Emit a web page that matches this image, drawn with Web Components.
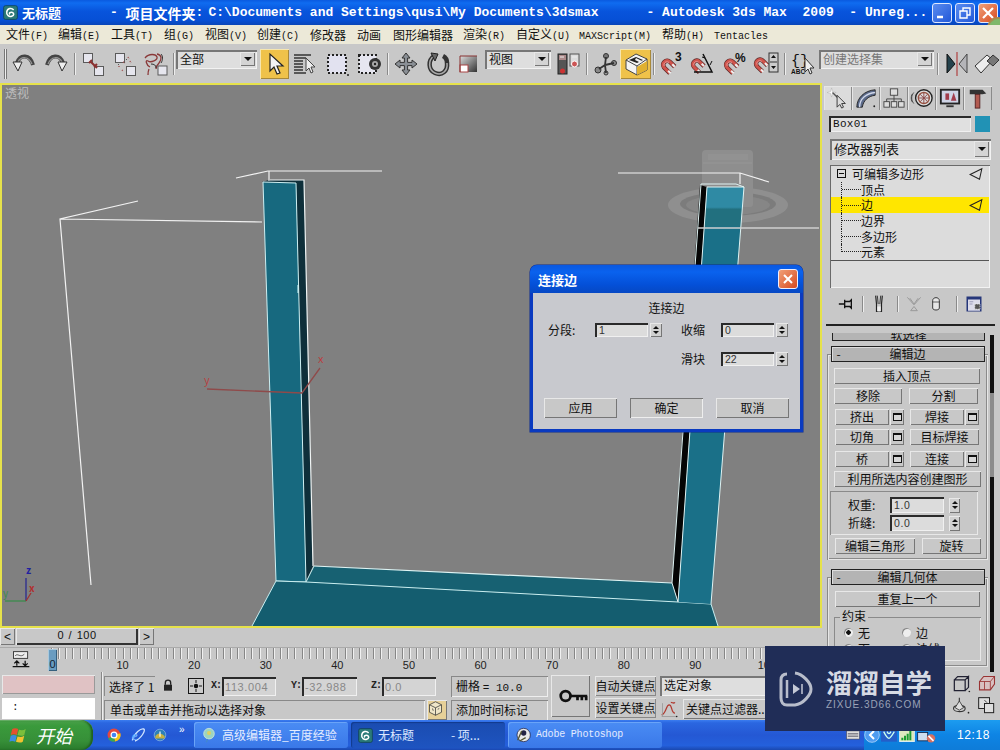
<!DOCTYPE html>
<html lang="zh">
<head>
<meta charset="utf-8">
<title>3ds Max</title>
<style>
html,body{margin:0;padding:0}
body{width:1000px;height:750px;overflow:hidden;position:relative;background:#c8c8c8;font:12px/1 "Noto Sans CJK SC","Liberation Sans",sans-serif;color:#111;display:flex;flex-direction:column}
.main{display:flex;height:589px}
.left{width:822px;display:flex;flex-direction:column}
</style>
</head>
<body>
<mx-titlebar></mx-titlebar>
<mx-menubar></mx-menubar>
<mx-toolbar></mx-toolbar>
<div class="main">
  <div class="left">
    <mx-viewport></mx-viewport>
    <mx-slider></mx-slider>
    <mx-track></mx-track>
  </div>
  <mx-panel></mx-panel>
</div>
<mx-status></mx-status>
<mx-taskbar></mx-taskbar>
<mx-dialog></mx-dialog>
<mx-watermark></mx-watermark>
<script>
const MONO='"Liberation Mono","Noto Sans CJK SC",monospace';
const RAISED='box-shadow:inset 1px 1px 0 #e8e8e8,inset -1px -1px 0 #767676;';
const SUNK='box-shadow:inset 2px 2px 0 #2a2a2a,inset -1px -1px 0 #f0f0f0;';
const sq=(x,y,s=9)=>`<rect x="${x}" y="${y}" width="${s}" height="${s}" fill="#e6e6ee" stroke="#5a5a5a"/>`;
const mag=`<path d="M12 21L5 14C1 9 8 3 12 7l6 6" fill="none" stroke="#5a2a2a" stroke-width="5.500"/><path d="M12 21L5 14C1 9 8 3 12 7l6 6" fill="none" stroke="#d0544c" stroke-width="3.800"/><path d="M5 12C4 8 8 6 11 8" fill="none" stroke="#eaa" stroke-width="1"/><path d="M10 18l3 3M15 10l3 3" stroke="#eee" stroke-width="2.600"/>`;
const magS=`<g transform="translate(0,4) scale(.82)">${mag}</g>`;
const ICONS={
undo:`<path d="M5 11C8 2 18 2 21 13" fill="none" stroke="#444" stroke-width="4"/><path d="M6 10C9 4 17 4 20 12" fill="none" stroke="#999" stroke-width="1.2"/><path d="M1 10h9l-4 9z" fill="#eee" stroke="#333"/>`,
redo:`<g transform="translate(24,0) scale(-1,1)"><path d="M5 11C8 2 18 2 21 13" fill="none" stroke="#444" stroke-width="4"/><path d="M6 10C9 4 17 4 20 12" fill="none" stroke="#999" stroke-width="1.2"/><path d="M1 10h9l-4 9z" fill="#eee" stroke="#333"/></g>`,
link:`${sq(2.5,1.5)}${sq(13.5,14.5)}<path d="M9 9l7 7M11 8l-3 3M16 12l-3 3" stroke="#8a3030" stroke-width="2" fill="none"/>`,
unlink:`${sq(2.5,1.5)}${sq(13.5,14.5)}<path d="M10 10l2 1M15 5l1 2M6 14v2M9 18l1 1M17 9l1 2" stroke="#a05050" stroke-width="1.4" stroke-dasharray="1 1"/><path d="M13 7l1 1M5 12l1 1" stroke="#555"/>`,
bind:`<path d="M1 6c4-5 11-4 12-1s-6 6-9 4-2 4 2 6M13 2c5 1 5 5 2 9M5 17c-1 2-1 4-1 6M15 11c-2 2-3 3-3 6" fill="none" stroke="#8a3838" stroke-width="1.3"/><path d="M17 2c2 2 2 6 0 9M7 12c3 0 5 1 5 4" fill="none" stroke="#333"/>${sq(14,14)}`,
arrow:`<path d="M7 2v17l4-4 3 7 3-1-3-7h6z" fill="#f4f4f4" stroke="#222" stroke-width="1.2"/>`,
byname:`<path d="M1 3h17M1 6h12M1 9h9M1 12h9M1 15h9M1 18h9M1 21h12" stroke="#333" stroke-width="1.6"/><path d="M13 6v13l3-3 2 5 2-1-2-5h4z" fill="#eee" stroke="#444"/>`,
rect:`<rect x="3" y="3" width="18" height="18" fill="#e2e2f0" stroke="#222" stroke-width="2" stroke-dasharray="2 2"/><circle cx="23" cy="23" r="1" fill="#222"/>`,
cross:`<rect x="1" y="3" width="17" height="18" fill="#e6e6f0" stroke="#222" stroke-width="2" stroke-dasharray="2 2"/><circle cx="17" cy="12" r="6" fill="#333"/><circle cx="17" cy="12" r="3" fill="#aaa"/><circle cx="17" cy="12" r="1.2" fill="#222"/>`,
move:`<path d="M12 1l4 5h-2.400v4.400h4.400V8l5 4-5 4v-2.400h-4.400V18H16l-4 5-4-5h2.400v-4.400H6V16l-5-4 5-4v2.400h4.400V6H8z" fill="#8a8f95" stroke="#333"/>`,
rotate:`<path d="M8 4C2 8 2 18 9 21s13-2 12-10c0-3-2-6-4-7" fill="none" stroke="#333" stroke-width="4.500"/><path d="M8 4C2 8 2 18 9 21s13-2 12-10" fill="none" stroke="#aaa" stroke-width="1.500"/><path d="M5 1l7 1-3 7z" fill="#666" stroke="#222"/>`,
scale:`<defs><linearGradient id="sc" x1="0" y1="0" x2="1" y2="1"><stop offset="0" stop-color="#ddd"/><stop offset="1" stop-color="#333"/></linearGradient></defs><rect x="3" y="4" width="17" height="16" fill="url(#sc)"/><rect x="3" y="13" width="8" height="7" fill="#fff" stroke="#a44"/><path d="M3 4h17M3 4v16" stroke="#833"/>`,
named:`<rect x="1" y="2" width="9" height="20" fill="#555" stroke="#222"/><rect x="2" y="3" width="7" height="5" fill="#a88"/><circle cx="5.500" cy="19" r="2.500" fill="#c33"/><rect x="13" y="2" width="9" height="12" fill="#ddd" stroke="#555"/><circle cx="17.500" cy="12" r="3" fill="#c55" stroke="#fff"/><path d="M3 5h4M15 5h5" stroke="#eee"/>`,
pivot:`<circle cx="5" cy="18" r="3" fill="#888" stroke="#333"/><circle cx="13" cy="4" r="2.500" fill="#777" stroke="#333"/><circle cx="21" cy="11" r="2.500" fill="#888" stroke="#333"/><circle cx="13" cy="21" r="2" fill="#999" stroke="#333"/><path d="M12 13L13 5M12 13L21 11M12 13L6 17M12 13L13 21" stroke="#333" stroke-width="1.800"/>`,
manip:`<path d="M2 8l10-6 11 5v11l-10 5-11-6z" fill="#f4f4f4" stroke="#444"/><path d="M2 8l11 6v9" fill="none" stroke="#444"/><path d="M23 7l-10 7" stroke="#444"/><path d="M5 8l7-3 7 3-6 3z" fill="#222"/><path d="M13 15l10-6v9l-10 5z" fill="#e0b030"/><path d="M12 6l6 3-1 2-6-3z" fill="#eee"/>`,
m3:`${magS}<text x="15" y="9" font-size="12" font-weight="700" font-family="Liberation Sans" fill="#111">3</text>`,
mang:`<g transform="translate(-1,4) scale(.78)">${mag}</g><path d="M12 2l9 18H3" fill="none" stroke="#111" stroke-width="1.500"/><path d="M11 5l3 1M19 13l2-4" stroke="#111"/>`,
mpct:`${magS}<text x="12" y="10" font-size="12" font-weight="700" font-family="Liberation Sans" fill="#111">%</text>`,
mspin:`<g transform="translate(-2,3) scale(.8)">${mag}</g><rect x="14" y="1" width="9" height="19" fill="#ccc" stroke="#333"/><path d="M16 6l2.500-3 2.500 3zM16 14l2.500 3 2.500-3z" fill="#111"/><path d="M15 10h7" stroke="#333"/>`,
abc:`<text x="0" y="13" font-size="15" font-family="Liberation Mono" fill="#111">{}</text><text x="0" y="22" font-size="6.500" font-weight="700" font-family="Liberation Sans" fill="#111">ABC</text><path d="M14 6v14l3-3 2 5 2-1-2-5h4z" fill="#eee" stroke="#333"/>`,
mirror:`<path d="M2 2v19l8-9z" fill="#24424c" stroke="#111"/><path d="M22 2v19l-8-9z" fill="#b4b4b8" stroke="#444"/><path d="M12 0v24" stroke="#b04040" stroke-width="1.200"/>`,
align:`<path d="M1 14L13 3l6 5L7 21z" fill="#eee" stroke="#333"/><path d="M13 9L19 3l6 5-6 6z" fill="#777" stroke="#333"/>`,
create:`<path d="M5 1l1 4 4 1-4 1-1 4-1-4-4-1 4-1z" fill="#fff" stroke="#aaa" stroke-width=".5"/><path d="M6 6l9 9" stroke="#555" stroke-width="1.500"/><path d="M11 9v13l3-3 2 4 2-1-2-4h4z" fill="#ddd" stroke="#333"/>`,
modify:`<path d="M2 22C2 12 10 4 22 3v6C14 10 9 15 8 22z" fill="#5b6a8a" stroke="#222"/><path d="M5 22C5 13 12 7 22 6" stroke="#cfd6e8" stroke-width="1.500" fill="none"/><circle cx="21" cy="21" r="1" fill="#222"/>`,
hier:`<rect x="8" y="2" width="8" height="7" fill="#ddd" stroke="#444"/><rect x="1" y="16" width="6" height="6" fill="#ddd" stroke="#444"/><rect x="9" y="16" width="6" height="6" fill="#ddd" stroke="#444"/><rect x="17" y="16" width="6" height="6" fill="#ddd" stroke="#444"/><path d="M12 9v7M4 16v-3h16v3" fill="none" stroke="#444"/>`,
motion:`<circle cx="14" cy="12" r="9" fill="#ddd" stroke="#222" stroke-width="1.500"/><circle cx="14" cy="12" r="6" fill="none" stroke="#954" stroke-width="1.500"/><path d="M14 6v12M8 12h12M10 8l8 8M18 8l-8 8" stroke="#844"/><path d="M3 6c-3 4-3 8 0 12M1 8c-1 3-1 5 0 8" stroke="#444" fill="none"/>`,
display:`<rect x="1" y="2" width="22" height="17" fill="#222"/><rect x="3" y="4" width="18" height="13" fill="#cfd4e6"/><path d="M7 7h4v7H7z" fill="#a23c4c"/><path d="M13 15l3-9 3 9z" fill="#a23c4c"/><path d="M8 21h8" stroke="#333" stroke-width="2"/>`,
util:`<path d="M3 3h14l4 4-4 1H3z" fill="#333"/><rect x="9" y="8" width="5" height="15" fill="#b25a50" stroke="#522"/>`,
pin:`<path d="M1 12h7M8 7v10M8 9h6l2-2v10l-2-2H8" fill="none" stroke="#111" stroke-width="1.600"/>`,
fork:`<path d="M8 2l1 10v9h6v-9l1-10" fill="none" stroke="#222" stroke-width="1.400"/><path d="M10 2l1 10M14 2l-1 10" stroke="#222"/><rect x="10" y="15" width="4" height="6" fill="#eee"/>`,
funnel:`<path d="M4 4l8 9 8-9M7 5l5 7M17 5l-5 7M8 20l4-5 4 5z" fill="none" stroke="#9a9a9a" stroke-width="1.200"/>`,
cup:`<path d="M7 7c0-6 10-6 10 0v11c0 4-10 4-10 0z" fill="#e6e6e6" stroke="#222" stroke-width="1.300"/><path d="M7 9h10" stroke="#222"/>`,
cfg:`<rect x="2" y="2" width="20" height="20" fill="#26377a"/><rect x="4" y="6" width="16" height="15" fill="#dcdcea"/><path d="M13 12h7v7h-7z" fill="#555" stroke="#eee" stroke-dasharray="2 1"/><path d="M6 9h5M6 12h4" stroke="#88a"/>`,
tkey:`<rect x="3" y="2" width="17" height="8" fill="#eee" stroke="#222"/><path d="M5 7c3-4 6 3 11-2" stroke="#444" fill="none"/><path d="M2 20h20M7 19v-6M4 16l3-3 3 3M17 13v6M14 16l3 3 3-3" fill="none" stroke="#111" stroke-width="1.500"/>`,
lock:`<path d="M5 10V7c0-5 8-5 8 0v3" fill="none" stroke="#222" stroke-width="2"/><rect x="3" y="10" width="12" height="9" fill="#222"/>`,
abs:`<rect x="2" y="2" width="20" height="20" fill="#ccc" stroke="#111" stroke-width="1.300"/><circle cx="12" cy="12" r="3" fill="#111"/><path d="M12 4v4M12 16v4M4 12h4M16 12h4" stroke="#111" stroke-width="1.300"/>`,
cube:`<path d="M10 1l8 4v10l-8 4-8-4V5z" fill="#efe6c8" stroke="#333"/><path d="M2 5l8 4 8-4M10 9v10" fill="none" stroke="#333"/><path d="M6 10l1 3M13 11l2-1" stroke="#333"/>`,
key:`<circle cx="7" cy="12" r="4.500" fill="none" stroke="#111" stroke-width="2.500"/><path d="M11 12h16M18 12v4M22 12v4M26 12v4" stroke="#111" stroke-width="2.500" fill="none"/>`,
fcurve:`<path d="M2 19c6-2 5-12 9-12s2 10 7 10M13 4c2 0 3 2 5 0" fill="none" stroke="#b03a30" stroke-width="1.500"/><path d="M2 21h17M3 5v16" stroke="#999"/><circle cx="20" cy="21" r="1" fill="#222"/>`,
nav1:`<path d="M4 7h13v13H4zM4 7l4-4h13M17 7l4-4v13l-4 4" fill="none" stroke="#223" stroke-width="1.500"/><circle cx="22" cy="21" r="1" fill="#222"/>`,
nav2:`<path d="M3 9l5-6h13v9l-5 7H3z" fill="#d8c0c0" stroke="#933" stroke-width="1.300"/><path d="M3 9h13v10M16 9l5-6M9 9v10" fill="none" stroke="#933"/>`,
nav3:`<path d="M10 2v5M3 15c0-5 14-5 14 0s-14 5-14 0z" fill="none" stroke="#333" stroke-width="1.300"/><path d="M10 6l5 8-5 3-5-3z" fill="#ddd" stroke="#333"/><circle cx="21" cy="20" r="1" fill="#222"/>`,
nav4:`<rect x="2" y="2" width="13" height="13" fill="#ddd" stroke="#222" stroke-width="1.200"/><rect x="9" y="9" width="11" height="11" fill="#ddd" stroke="#222" stroke-width="1.200"/><path d="M9 5l3 3" stroke="#222"/>`,
maxlogo:`<rect x="1" y="1" width="22" height="22" rx="3" fill="#2b7a78" stroke="#0c3a44"/><path d="M17 8C14 4 7 5 6 11s4 8 8 7 4-5 1-6-6 1-4 3" fill="none" stroke="#fff" stroke-width="2.400"/>`,
flag:`<path d="M3 4c3-2 6-1 8 0l-2 8c-2-1-5-2-8 0z" fill="#e5502e"/><path d="M12 5c3 1 6 1 9-1l-2 8c-3 2-6 1-9 0z" fill="#7bbf3c"/><path d="M1 13c3-2 6-1 8 0l-2 8c-2-1-5-2-8 0z" fill="#3c8ce0"/><path d="M10 14c3 1 6 1 9-1l-2 8c-3 2-6 1-9 0z" fill="#f2c230"/>`,
chrome:`<circle cx="12" cy="12" r="11" fill="#e5483c"/><path d="M12 12L2 18A11 11 0 0 0 14 23z" fill="#3aa757"/><path d="M12 12l11-3A11 11 0 0 1 14 23z" fill="#f5c518"/><circle cx="12" cy="12" r="5" fill="#4285f4" stroke="#fff" stroke-width="2"/>`,
ie:`<path d="M5 20C8 8 18 2 22 3S18 18 9 21" fill="none" stroke="#cfe4ff" stroke-width="2"/><text x="4" y="20" font-size="20" font-weight="700" font-style="italic" font-family="Liberation Serif" fill="#6ab0ff">e</text>`,
swirl:`<circle cx="12" cy="12" r="10" fill="#2c80b8" stroke="#a8c8e8"/><path d="M4 14c4-6 10-6 16 0v4H4z" fill="#c8b040"/><path d="M12 6v9" stroke="#fff" stroke-width="2"/>`,
bulb:`<circle cx="12" cy="10" r="8" fill="#9cd4c0" stroke="#e0f0e0"/><circle cx="12" cy="9" r="3" fill="#e0d060"/><path d="M10 18l-2 5" stroke="#48c" stroke-width="2"/>`,
ps:`<circle cx="13" cy="12" r="10" fill="#e8e8e8" stroke="#113"/><circle cx="13" cy="9" r="4" fill="#224"/><path d="M4 20L10 6M7 21L16 16" stroke="#553" stroke-width="2"/>`,
drive:`<rect x="1" y="5" width="22" height="14" fill="#ddd" stroke="#445"/><path d="M3 10h18M3 14h18" stroke="#445" stroke-width="1.500"/>`,
round:`<circle cx="12" cy="12" r="11" fill="#4f9cf0" stroke="#cfe4ff"/><path d="M15 6l-6 6 6 6" fill="none" stroke="#fff" stroke-width="3"/>`,
shield:`<rect x="0" y="2" width="24" height="20" fill="#245ec8"/><path d="M4 7c4 8 6 10 8 10s5-5 8-10" fill="none" stroke="#cfe" stroke-width="2"/><path d="M9 7c2 4 4 4 6 0" fill="none" stroke="#cfe" stroke-width="2"/>`,
signal:`<rect x="1" y="2" width="22" height="20" fill="#dce8c0" stroke="#fff"/><path d="M5 20v-4M9 20v-7M13 20v-10M17 20V5" stroke="#1a9c30" stroke-width="3"/>`,
net:`<rect x="2" y="9" width="12" height="10" fill="#cde" stroke="#124"/><path d="M14 6l1 1M17 3l1 2M21 2l1 3" stroke="#fff" stroke-width="1.500"/><circle cx="18" cy="16" r="5" fill="#d87060"/><path d="M15 13l6 6" stroke="#fff" stroke-width="2"/>`,
tri:`<path d="M2 13L22 3L18 21z" fill="none" stroke="#222" stroke-width="1.800"/>`
};
function def(name,css,html){
  customElements.define(name,class extends HTMLElement{
    connectedCallback(){
      if(this.shadowRoot)return;
      this.attachShadow({mode:'open'}).innerHTML=`<style>${css}</style>`+(typeof html==='function'?html(this):html);
    }
  });
}
def('mx-icon',`:host{display:inline-flex;flex:none;align-items:center;justify-content:center}svg{display:block;overflow:visible}`,
  el=>{const s=el.getAttribute('s')||24;return `<svg width="${s}" height="${s}" viewBox="0 0 24 24">${ICONS[el.getAttribute('n')]||''}</svg>`});
def('mx-btn',`:host{display:flex;align-items:center;justify-content:center;box-sizing:border-box;height:16px;background:#c8c8c8;${RAISED}font-size:12px;line-height:1;white-space:nowrap;flex:none}`,`<slot></slot>`);
def('mx-tick',`:host{display:flex;box-sizing:border-box;width:14px;height:16px;margin-left:1px;background:#c8c8c8;${RAISED}align-items:center;justify-content:center;flex:none}i{display:block;width:9px;height:8px;box-sizing:border-box;border:1px solid #111;border-top-width:2px;background:#d8d8d8}`,`<i></i>`);
def('mx-field',`:host{display:block;box-sizing:border-box;height:16px;background:#dcdcdc;${SUNK}padding:3px 0 0 4px;font:10.500px/1 "Liberation Sans",sans-serif;letter-spacing:.6px;color:#444;overflow:hidden;white-space:nowrap;flex:none}`,`<slot></slot>`);
def('mx-spin',`:host{display:flex;flex-direction:column;justify-content:center;gap:2px;align-items:center;box-sizing:border-box;width:11px;height:15px;background:#d0d0d0;${RAISED}flex:none}i{display:block;width:0;height:0;border:3px solid transparent}.u{border-bottom-color:#111;border-top-width:0}.d{border-top-color:#111;border-bottom-width:0}`,`<i class="u"></i><i class="d"></i>`);
def('mx-combo',`:host{display:flex;box-sizing:border-box;height:18px;background:#dedede;box-shadow:inset 2px 2px 0 #777,inset -1px -1px 0 #f2f2f2;flex:none;align-items:stretch}
 .t{flex:1;padding:3px 0 0 4px;font-size:inherit;line-height:1;white-space:nowrap;overflow:hidden}
 .b{width:15px;margin:2px 2px 3px 0;background:#d4d4d4;${RAISED}display:flex;align-items:center;justify-content:center}
 .b i{display:block;width:0;height:0;border:4px solid transparent;border-top:4px solid #111;border-bottom-width:0}`,
 `<div class="t"><slot></slot></div><div class="b"><i></i></div>`);

def('mx-titlebar',`:host{display:flex;flex:none;height:25px;align-items:center;background:linear-gradient(#0a5ae0 0,#0f6cf0 12%,#0854dc 45%,#0650d6 80%,#0a46b8 100%);color:#fff;font-weight:700;font-size:13px;white-space:nowrap;position:relative;overflow:hidden}
 .m{font-family:${MONO};white-space:pre;font-size:13px}
 .c{font-size:14px}
 .w{display:block;box-sizing:border-box;width:20px;height:20px;border:1px solid #dfe8ff;border-radius:3px;background:linear-gradient(135deg,#5a8cf0,#2258d8);margin-left:3px;position:relative;flex:none}
 .x{background:linear-gradient(135deg,#f0a078,#d84a20)}
 .bars{margin-left:auto;display:flex;margin-right:2px}
 svg{display:block}
 .blob{position:absolute;right:-9px;top:17px;width:18px;height:18px;border-radius:50%;background:#7fb86a;border:2px solid #a88b50}`,
 `<mx-icon n="maxlogo" s="15" style="margin:0 4px 0 3px"></mx-icon><span style="width:88px">无标题</span><span class="m">- </span><span class="c">项目文件夹</span><span class="m" style="margin-right:5px">:</span><span class="m">C:\\Documents and Settings\\qusi\\My Documents\\3dsmax</span><span class="m" style="margin-left:48px">- Autodesk 3ds Max  2009  - Unreg...</span>
 <div class="bars"><span class="w"><svg width="18" height="18"><path d="M4 13h6" stroke="#fff" stroke-width="2.500"/></svg></span><span class="w"><svg width="18" height="18"><path d="M4 7h7v7H4zM7 7V4h7v7h-3" fill="none" stroke="#fff" stroke-width="1.400"/></svg></span><span class="w x"><svg width="18" height="18"><path d="M4 4l10 10M14 4L4 14" stroke="#fff" stroke-width="2.200"/></svg></span></div><div class="blob"></div>`);

def('mx-menubar',`:host{display:flex;flex:none;height:20px;background:#ece9d8;align-items:center;padding-left:6px;font-size:12px;white-space:nowrap;box-shadow:inset 0 -1px 0 #c8c8c8}
 span{display:block;flex:none}small{font:10px ${MONO};}`,
 [['文件<small>(F)</small>',52],['编辑<small>(E)</small>',53],['工具<small>(T)</small>',53],['组<small>(G)</small>',41],['视图<small>(V)</small>',52],['创建<small>(C)</small>',53],['修改器',47],['动画',36],['图形编辑器',70],['渲染<small>(R)</small>',53],['自定义<small>(U)</small>',63],['<small>MAXScript(M)</small>',83],['帮助<small>(H)</small>',52],['<small>Tentacles</small>',60]].map(([t,w])=>`<span style="width:${w}px">${t}</span>`).join(''));

def('mx-tool',`:host{display:flex;flex:none;align-items:center;justify-content:center;height:38px}:host([on]){background:#efc24a;box-shadow:inset 1px 1px 0 #f6e6b0,inset -1px -1px 0 #a8893a;height:30px;margin-top:-1px}`,
 el=>`<mx-icon n="${el.getAttribute('n')}" s="${el.getAttribute('s')||24}"></mx-icon>`);
def('mx-toolbar',`:host{display:flex;flex:none;height:38px;background:#c8c8c8;align-items:center;overflow:hidden}
 .sep{flex:none;width:1px;height:22px;background:#8a8a8a;box-shadow:1px 0 0 #eee}
 .grip{flex:none;width:1px;height:30px;margin:0 0 0 4px;border-left:1px solid #777;border-right:1px solid #777;background:#eee}
 mx-combo{height:19px;margin-top:-9px}`,
 (()=>{const t=(n,w,x='')=>`<mx-tool n="${n}" style="width:${w}px" ${x}></mx-tool>`,s=(l,r)=>`<div class="sep" style="margin:0 ${r}px 0 ${l}px"></div>`;
 return `<div class="grip"></div>`+`<div style="width:1px;flex:none"></div>`+t('undo',32)+t('redo',32)+s(2,2)+t('link',32)+t('unlink',31)+t('bind',32)+s(1,1)+
 `<mx-combo style="width:81px;margin-left:1px;margin-right:3px">全部</mx-combo>`+t('arrow',29,'on')+t('byname',32)+t('rect',32)+t('cross',33)+s(1,2)+t('move',32)+t('rotate',32)+t('scale',29)+
 `<mx-combo style="width:66px;margin-left:2px;margin-right:2px">视图</mx-combo>`+t('named',31)+s(2,3)+t('pivot',30)+t('manip',31,'on')+s(2,2)+t('m3',31)+t('mang',32)+t('mpct',32)+t('mspin',32)+s(1,2)+t('abc',32)+
 `<mx-combo style="width:115px;color:#777">创建选择集</mx-combo>`+s(3,3)+t('mirror',32)+t('align',26)})());

def('mx-viewport',`:host{display:block;box-sizing:border-box;height:545px;border:2px solid #e6e24a;background:#808080;overflow:hidden;flex:none}svg{display:block}text{font-family:"Noto Sans CJK SC","Liberation Sans",sans-serif}`,
`<svg width="818" height="541" viewBox="2 85 818 541">
<defs><linearGradient id="rc" x1="0" y1="187" x2="0" y2="240" gradientUnits="userSpaceOnUse"><stop offset="0" stop-color="#2f8aa4"/><stop offset=".38" stop-color="#2f8aa4"/><stop offset=".42" stop-color="#22707f"/><stop offset=".72" stop-color="#22707f"/><stop offset=".78" stop-color="#1a7088"/></linearGradient></defs>
<text x="5" y="98" font-size="12" fill="#bcbcbc">透视</text>
<ellipse cx="728" cy="205" rx="60" ry="18" fill="#8f8f8f"/><ellipse cx="728" cy="204" rx="48" ry="12" fill="#7c7c7c"/><ellipse cx="728" cy="205" rx="42" ry="10" fill="#868686"/>
<path d="M706 150h43q4 0 4 4v50q0 3-3 3h-45q-3 0-3-3v-50q0-4 4-4z" fill="#8e8e8e"/><path d="M703 163h49" stroke="#969696" fill="none" stroke-width="1"/><path d="M708 154h40v6h-40z" fill="#929292"/>
<path d="M269 180L304 180L313 566L306 582L296 183L262 182z" fill="#0e2f3a"/>
<path d="M263 182L296 183L306 582L276 581z" fill="#17697f"/>
<path d="M263 182L276 581L306 582L296 183L263 182" fill="none" stroke="#cdeff2" stroke-width="1"/>
<path d="M270 180L304 180L313 566" fill="none" stroke="#f0f4f4" stroke-width="1.200"/>
<path d="M306 582L314 566L672 583L678 602z" fill="#176172"/>
<path d="M276 581L306 582L678 602L711 604L718 626L252 626z" fill="#145d6f"/>
<path d="M314 566L672 583" stroke="#dff4f4" stroke-width="1.200" fill="none"/>
<path d="M252 626L276 581L306 582L678 602L711 604L718 626M306 582L314 566" stroke="#c8eef0" stroke-width="1" fill="none"/>
<path d="M700 185L707 187L678 602L672 583z" fill="#050505"/>
<path d="M707 187L744 187L711 604L678 602z" fill="url(#rc)"/>
<path d="M701 184L736 184L744 187L711 604M707 187L744 187M707 187L678 602M701 184L672 583L678 602" fill="none" stroke="#dff3f3" stroke-width="1"/>
<g stroke="#f2f2f2" stroke-width="1.200" fill="none">
<path d="M236 178L268 171L382 171M269 171V181"/>
<path d="M138 201L60 219L91 585M60 219L262 222"/>
<path d="M618 173H740L769 182M740 173V184"/>
</g>
<path d="M698 228H819" stroke="#cfcfcf" stroke-width="1.400"/>
<path d="M298 285v8" stroke="#dff" stroke-width="1"/>
<path d="M207 389L302 393L320 368" stroke="#8f4a4a" stroke-width="1.300" fill="none"/>
<text x="204" y="384" font-size="11" fill="#b84040">y</text><text x="318" y="363" font-size="11" fill="#b84040">x</text>
<path d="M26 578V601" stroke="#2a2a90" stroke-width="1.300"/><path d="M5 601H26" stroke="#3c8c4c" stroke-width="1.300"/><path d="M26 601L31 593" stroke="#a03030" stroke-width="1.300"/>
<text x="26" y="574" font-size="10" font-weight="700" fill="#2020a0">z</text><text x="29" y="592" font-size="10" font-weight="700" fill="#b03030">x</text><text x="3" y="597" font-size="10" fill="#3c8c4c">y</text>
</svg>`);

def('mx-slider',`:host{display:flex;flex:none;height:20px;background:#c8c8c8;align-items:flex-start;font:11px/1 "Liberation Sans",sans-serif;box-shadow:inset 0 -1px 0 #aaa}
 .a{width:15px;height:17px;${RAISED}display:flex;align-items:center;justify-content:center;font-size:12px;flex:none}
 .s{width:122px;height:17px;margin:0 1px;box-shadow:inset 1px 1px 0 #e8e8e8,inset -2px -2px 0 #333;display:flex;align-items:center;justify-content:center;letter-spacing:.5px;word-spacing:1px;flex:none;padding-bottom:3px;box-sizing:border-box}`,
 `<div class="a">&lt;</div><div class="s">0 / 100</div><div class="a">&gt;</div>`);

def('mx-track',`:host{display:flex;flex:none;height:24px;background:#c8c8c8;position:relative;overflow:hidden}
 .i{width:48px;flex:none;display:flex;justify-content:center;padding:0 6px 0 0;box-sizing:border-box;align-items:center}
 .r{flex:1;min-width:0;display:flex;flex-direction:column}
 .t{height:11px;background:repeating-linear-gradient(90deg,transparent 0 3px,#868686 3px 4px,#f0f0f0 4px 5px,transparent 5px 7.160px);flex:none}
 .l{display:flex;padding-left:38.800px;font:11px/13px "Liberation Sans",sans-serif;color:#222;flex:none}
 .l span{width:71.600px;text-align:center;flex:none}
 .th{position:absolute;left:48px;top:1px;width:9px;height:22px;background:#6a9cc0;box-shadow:inset 1px 1px 0 #a8c8dc,inset -1px -1px 0 #36607e;font:11px/1 "Liberation Sans",sans-serif;display:flex;align-items:flex-end;justify-content:center;padding-bottom:1px;box-sizing:border-box;color:#123}`,
 `<div class="i"><mx-icon n="tkey" s="20"></mx-icon></div><div class="r"><div class="t"></div><div class="l">${[10,20,30,40,50,60,70,80,90,100].map(n=>`<span>${n}</span>`).join('')}</div></div><div class="th">0</div>`);

def('mx-rollout',`:host{display:block;width:161px;margin-left:5px}
 .h{box-sizing:border-box;height:16px;margin:0 3px 0 4px;background:#b4b4b4;border:1px solid #222;box-shadow:inset 1px 1px 0 #ddd;display:flex;align-items:center;position:relative;z-index:1;font-size:12px}
 .h b{font-weight:400;width:13px;text-align:center;flex:none}.h span{flex:1;text-align:center;padding-right:14px}
 .f{box-sizing:border-box;margin-top:-8px;padding:14px 7px 6px 7px;box-shadow:inset 1px 1px 0 #8a8a8a,inset 2px 2px 0 #e6e6e6,inset -1px -1px 0 #e6e6e6,inset -2px -2px 0 #8a8a8a}`,
 el=>`<div class="h"><b>-</b><span>${el.getAttribute('t')}</span></div><div class="f"><slot></slot></div>`);

def('mx-stack',`:host{display:block;box-sizing:border-box;width:160px;height:123px;margin-left:8px;background:#dcdcdc;box-shadow:inset 1px 1px 0 #6a6a6a,inset -1px -1px 0 #f2f2f2;padding:1px 1px 0;font-size:12px}
 .list{height:94px;border-bottom:1px solid #555;display:grid;grid-auto-rows:15.700px}
 .r{display:flex;align-items:center;white-space:nowrap;position:relative}
 .box{width:9px;height:9px;box-sizing:border-box;border:1px solid #111;margin:0 6px 0 6px;flex:none;background:linear-gradient(#111,#111) center/5px 1px no-repeat}
 .c{flex:none;width:20px;height:100%;margin-left:10px;box-sizing:border-box;border-left:1px dotted #222;margin-right:0;background:repeating-linear-gradient(90deg,#222 0 1px,transparent 1px 2px) 0 50%/100% 1px no-repeat}
 .c.e{height:50%;align-self:flex-start;background-position:0 100%}
 .on{background:#ffe600}
 mx-icon{margin-left:auto;margin-right:6px}`,
 `<div class="list">
 <div class="r"><span class="box"></span>可编辑多边形<mx-icon n="tri" s="14"></mx-icon></div>
 <div class="r"><span class="c"></span>顶点</div>
 <div class="r on"><span class="c"></span>边<mx-icon n="tri" s="14"></mx-icon></div>
 <div class="r"><span class="c"></span>边界</div>
 <div class="r"><span class="c"></span>多边形</div>
 <div class="r"><span class="c e"></span>元素</div></div>`);

def('mx-panel',`:host{display:flex;flex-direction:column;width:178px;height:589px;background:#c8c8c8;overflow:hidden;flex:none;padding-top:3px;box-sizing:border-box}
 .tabs{display:flex;height:24px;margin-left:2px;flex:none}
 .tab{width:28px;display:flex;align-items:center;justify-content:center;box-shadow:inset 1px 1px 0 #e6e6e6,inset -1px 0 0 #8a8a8a;flex:none}
 .tab.on{background:#dcdcdc}
 .name{display:flex;margin:6px 0 0 7px;flex:none}
 .name mx-field{width:142px;font:11px/1 ${MONO};color:#111;letter-spacing:.3px;background:#e0e0e0}
 .sw{width:15px;height:16px;background:#2192b5;margin-left:4px;flex:none}
 .mc{width:161px;height:21px;margin:7px 0 5px 8px;font-size:13px}
 .ic{display:flex;height:24px;margin:4px 0 8px;align-items:center;flex:none}
 .ic i{display:block;width:1px;height:16px;background:#8a8a8a;box-shadow:1px 0 0 #eee;flex:none}
 .line{height:2px;background:#222;margin:0 5px 0 4px;flex:none}
 .roll{display:flex;flex:1;min-height:0}
 .col{width:168px;flex:none}
 .sb{width:4px;margin-left:0;background:#111;margin-top:9px;flex:none;display:flex;flex-direction:column}
 .sb div{height:84px;margin-top:58px;background:#8c8c8c}
 .part{height:8px;margin:7px 0 5px 10px;width:153px;overflow:hidden;box-sizing:border-box;background:#b4b4b4;border:1px solid #222;border-top:0;font-size:12px;line-height:4px;text-align:center;flex:none}
 .row{display:flex;margin-top:4px}
 .gr{margin:4px 0 0 -4px;width:148px;height:44px;box-sizing:border-box;box-shadow:inset 1px 1px 0 #8a8a8a,inset -1px -1px 0 #e8e8e8;padding:6px 0 0 18px;display:flex;flex-direction:column;gap:2px}
 .gr div{display:flex;align-items:center;height:16px}.gr label{width:42px;flex:none}.gr mx-field{width:54px;color:#333}.gr mx-spin{margin-left:5px}
 .cs{position:relative;margin-top:10px;height:44px;box-shadow:inset 1px 1px 0 #8a8a8a,inset -1px -1px 0 #e8e8e8;padding:9px 0 0 10px;box-sizing:border-box;width:147px}
 .cs em{position:absolute;left:6px;top:-7px;background:#c8c8c8;font-style:normal;padding:0 2px}
 .rr{display:grid;grid-template-columns:58px 60px;row-gap:3px}
 .rr span{display:flex;align-items:center;gap:5px;height:13px;white-space:nowrap}
 .rr u{display:block;width:9px;height:9px;border-radius:50%;background:#eee;box-shadow:inset 1px 1px 0 #888;flex:none}
 .rr u.on{background:radial-gradient(#111 0 2px,#eee 2.500px)}`,
 `<div class="tabs"><div class="tab on"><mx-icon n="create" s="22"></mx-icon></div><div class="tab"><mx-icon n="modify" s="22"></mx-icon></div><div class="tab"><mx-icon n="hier" s="22"></mx-icon></div><div class="tab"><mx-icon n="motion" s="22"></mx-icon></div><div class="tab"><mx-icon n="display" s="22"></mx-icon></div><div class="tab"><mx-icon n="util" s="22"></mx-icon></div></div>
 <div class="name"><mx-field>Box01</mx-field><div class="sw"></div></div>
 <mx-combo class="mc">修改器列表</mx-combo>
 <mx-stack></mx-stack>
 <div class="ic"><mx-icon n="pin" s="20" style="margin-left:16px"></mx-icon><i style="margin-left:4px"></i><mx-icon n="fork" s="20" style="margin-left:6px"></mx-icon><i style="margin-left:8px"></i><mx-icon n="funnel" s="20" style="margin-left:6px"></mx-icon><mx-icon n="cup" s="16" style="margin-left:4px"></mx-icon><i style="margin-left:12px"></i><mx-icon n="cfg" s="18" style="margin-left:8px"></mx-icon></div>
 <div class="line"></div>
 <div class="roll"><div class="col">
  <div class="part">软选择</div>
  <mx-rollout t="编辑边">
   <mx-btn style="width:146px">插入顶点</mx-btn>
   <div class="row"><mx-btn style="width:68px">移除</mx-btn><mx-btn style="width:69px;margin-left:7px">分割</mx-btn></div>
   <div class="row" style="margin-top:5px"><mx-btn style="width:54px;margin-left:1px">挤出</mx-btn><mx-tick></mx-tick><mx-btn style="width:54px;margin-left:6px">焊接</mx-btn><mx-tick></mx-tick></div>
   <div class="row"><mx-btn style="width:54px;margin-left:1px">切角</mx-btn><mx-tick></mx-tick><mx-btn style="width:69px;margin-left:6px">目标焊接</mx-btn></div>
   <div class="row" style="margin-top:6px"><mx-btn style="width:54px;margin-left:1px">桥</mx-btn><mx-tick></mx-tick><mx-btn style="width:54px;margin-left:6px">连接</mx-btn><mx-tick></mx-tick></div>
   <div class="row"><mx-btn style="width:147px">利用所选内容创建图形</mx-btn></div>
   <div class="gr"><div><label>权重:</label><mx-field>1.0</mx-field><mx-spin></mx-spin></div><div><label>折缝:</label><mx-field>0.0</mx-field><mx-spin></mx-spin></div></div>
   <div class="row" style="margin-top:3px"><mx-btn style="width:80px;margin-left:1px">编辑三角形</mx-btn><mx-btn style="width:59px;margin-left:7px">旋转</mx-btn></div>
  </mx-rollout>
  <mx-rollout t="编辑几何体" style="margin-top:9px">
   <mx-btn style="width:145px;margin-left:1px">重复上一个</mx-btn>
   <div class="cs"><em>约束</em><div class="rr"><span><u class="on"></u>无</span><span><u></u>边</span><span><u></u>面</span><span><u></u>法线</span></div></div>
  </mx-rollout>
 </div><div class="sb"><div></div></div></div>`);

def('mx-status',`:host{display:flex;flex:none;height:48px;background:#c8c8c8;font-size:12px;white-space:nowrap;overflow:hidden}
 .lc{width:93px;margin:3px 0 0 2px;flex:none}
 .pink{height:19px;background:#e0c2c4;${RAISED.replace('#767676','#999')}}
 .white{height:21px;margin-top:4px;background:#fff;padding:4px 0 0 10px;box-sizing:border-box;font:11px/1 ${MONO}}
 .vs{width:1px;margin:0 3px 0 6px;background:#888;box-shadow:1px 0 0 #eee;flex:none}
 .c1{width:343px;flex:none;margin:3px 0 0 -1px}
 .r1{display:flex;height:22px;align-items:center}
 .sel{width:51px;height:20px;box-shadow:inset 1px 1px 0 #8a8a8a;padding:5px 0 0 5px;box-sizing:border-box;overflow:hidden;flex:none}
 .lab{font:700 10px/1 ${MONO};letter-spacing:-1px;width:11px;flex:none;color:#222}
 .f{width:55px;height:19px;padding:5px 0 0 3px;color:#888;font-size:11px;background:#d4d4d4}
 .r2{display:flex;height:20px;margin-top:3px}
 .pr{width:321px;height:20px;box-shadow:inset 1px 1px 0 #888,inset -1px -1px 0 #eee;padding:4px 0 0 6px;box-sizing:border-box;flex:none}
 .cb{width:20px;height:20px;margin-left:2px;background:#e6d098;${RAISED}display:flex;align-items:center;justify-content:center;flex:none}
 .c2{width:97px;margin:4px 0 0 4px;flex:none}
 .c2 div{height:21px;box-shadow:inset 1px 1px 0 #888,inset -1px -1px 0 #eee;padding:4px 0 0 5px;box-sizing:border-box;margin-bottom:3px}
 .mm{font:11px/1 ${MONO}}
 .key{width:39px;height:42px;margin:3px 0 0 3px;${RAISED}display:flex;align-items:center;justify-content:center;flex:none}
 .c3{width:61px;margin:4px 0 0 5px;flex:none}
 .c3 div{height:20px;box-shadow:inset 1px 1px 0 #e8e8e8,inset -1px -1px 0 #888;display:flex;align-items:center;justify-content:center;margin-bottom:2px}
 .c4{width:125px;margin:4px 0 0 4px;flex:none}
 .c4 mx-combo{width:125px;height:20px}
 .c4 .l{display:flex;margin-top:2px;align-items:center;height:22px}
 .c4 .k{margin-left:3px;width:95px;height:20px;${RAISED}display:flex;align-items:center;padding-left:3px;box-sizing:border-box}
 .nav{margin-left:auto;width:52px;display:grid;grid-template-columns:26px 26px;grid-auto-rows:22px;padding-top:1px;flex:none;justify-items:center;align-items:center}`,
 `<div class="lc"><div class="pink"></div><div class="white">:</div></div><div class="vs"></div>
 <div class="c1"><div class="r1"><div class="sel">选择了 1</div><mx-icon n="lock" s="16" style="margin-left:7px"></mx-icon><mx-icon n="abs" s="18" style="margin-left:9px"></mx-icon><span class="lab" style="margin-left:6px">X:</span><mx-field class="f" style="width:54px">113.004</mx-field><span class="lab" style="margin-left:15px">Y:</span><mx-field class="f">-32.988</mx-field><span class="lab" style="margin-left:14px">Z:</span><mx-field class="f" style="width:54px">0.0</mx-field></div>
 <div class="r2"><div class="pr">单击或单击并拖动以选择对象</div><div class="cb"><mx-icon n="cube" s="18"></mx-icon></div></div></div>
 <div class="c2"><div>栅格 <span class="mm">= 10.0</span></div><div>添加时间标记</div></div>
 <div class="key"><mx-icon n="key" s="26"></mx-icon></div>
 <div class="c3"><div>自动关键点</div><div>设置关键点</div></div>
 <div class="c4"><mx-combo>选定对象</mx-combo><div class="l"><mx-icon n="fcurve" s="20"></mx-icon><div class="k">关键点过滤器...</div></div></div>
 <div class="nav"><mx-icon n="nav1" s="20"></mx-icon><mx-icon n="nav2" s="20"></mx-icon><mx-icon n="nav3" s="20"></mx-icon><mx-icon n="nav4" s="20"></mx-icon></div>`);

def('mx-taskbar',`:host{display:flex;flex:none;height:30px;background:linear-gradient(#3a7cf0 0,#2a66e0 10%,#2458d4 50%,#2460dc 85%,#1a48b0 100%);color:#fff;font-size:12px;white-space:nowrap;align-items:stretch;overflow:hidden}
 .st{width:93px;flex:none;background:linear-gradient(#4aa04a,#3a9a3c 20%,#368f38 70%,#2a7a2c);border-radius:0 12px 12px 0;box-shadow:inset -2px 0 2px #1f5f20,inset 0 1px 0 #7cc87c;display:flex;align-items:center;padding-left:10px;box-sizing:border-box;font:italic 18px/1 "Noto Sans CJK SC",sans-serif;gap:8px}
 .q{display:flex;align-items:center;gap:8px;margin-left:14px;width:84px;flex:none;font:10px/1 "Liberation Sans",sans-serif}
 .q b{font-weight:400;margin:-10px 0 0 4px}
 .t{display:flex;align-items:center;margin:2px 0 2px 3px;width:154px;border-radius:3px;background:linear-gradient(#4a8cf4,#3a78e8);box-shadow:inset 1px 1px 0 #6aa4f8;padding-left:7px;box-sizing:border-box;gap:5px;flex:none;overflow:hidden;color:#e4ecff}
 .t.a{background:linear-gradient(#1a4cb0,#1e54c0);box-shadow:inset 1px 1px 1px #123a8c;color:#dce8ff}
 .mono{font:10px/1 ${MONO};letter-spacing:-.2px}
 .dr{margin-left:auto;margin-right:4px;align-self:center}
 .tr{width:136px;background:linear-gradient(#1c9cf0,#0e84e4 50%,#0e7cd8);display:flex;align-items:center;flex:none;box-sizing:border-box}
 .tr mx-icon{margin-right:1px}
 .clk{font:12px/1 "Liberation Sans",sans-serif;margin-left:20px;letter-spacing:.6px}`,
 `<div class="st"><mx-icon n="flag" s="18"></mx-icon><span>开始</span></div>
 <div class="q"><mx-icon n="chrome" s="14"></mx-icon><mx-icon n="ie" s="16"></mx-icon><mx-icon n="swirl" s="14"></mx-icon><b>»</b></div>
 <div class="t"><mx-icon n="bulb" s="16"></mx-icon>高级编辑器_百度经验</div>
 <div class="t a"><mx-icon n="maxlogo" s="15"></mx-icon>无标题<span style="margin-left:32px">- 项...</span></div>
 <div class="t"><mx-icon n="ps" s="16"></mx-icon><span class="mono">Adobe Photoshop</span></div>
 <mx-icon class="dr" n="drive" s="14"></mx-icon>
 <div class="tr"><mx-icon n="round" s="16"></mx-icon><mx-icon n="shield" s="16"></mx-icon><mx-icon n="signal" s="16" style="margin-left:1px"></mx-icon><mx-icon n="net" s="20"></mx-icon><span class="clk">12:18</span></div>`);

def('mx-dialog',`:host{position:absolute;left:530px;top:265px;width:273px;height:167px;box-sizing:border-box;display:flex;flex-direction:column;background:#0a3ac0;border-radius:7px 7px 0 0;padding:0 3px 3px;box-shadow:0 0 0 .5px #0a2a90;font-size:12px}
 .tb{height:28px;flex:none;margin:0 -3px;background:linear-gradient(#0a58e0,#0a62ee 25%,#0450d8 70%,#0648c4);border-radius:7px 7px 0 0;color:#fff;font-weight:700;font-size:13px;display:flex;align-items:center;padding-left:8px}
 .x{margin-left:auto;margin-right:5px;width:20px;height:20px;box-sizing:border-box;border:1px solid #eef;border-radius:3px;background:linear-gradient(135deg,#f0a078,#d84a20);display:flex;align-items:center;justify-content:center}
 .b{flex:1;background:#c8c9ce;padding:9px 0 0 15px}
 .cap{height:14px;text-align:center;margin-left:-15px}
 .g{display:grid;grid-template-columns:47px 67px 19px 40px 67px;grid-auto-rows:14px;row-gap:15px;margin-top:7px;align-items:center}
 .g div{display:flex;align-items:center;justify-content:space-between}
 mx-field{width:53px;height:14px;padding-top:2px;font-size:10.500px;color:#333;letter-spacing:0;background:#dcdcdc}
 mx-spin{height:14px;width:12px}
 .bs{display:flex;gap:13px;margin:32px 0 0 -4px}
 mx-btn{width:73px;height:20px}
 mx-btn.o{box-shadow:inset 1px 1px 0 #777,inset -1px -1px 0 #eee}`,
 `<div class="tb">连接边<div class="x"><svg width="12" height="12"><path d="M2 2l8 8M10 2l-8 8" stroke="#fff" stroke-width="2"/></svg></div></div>
 <div class="b"><div class="cap">连接边</div>
 <div class="g"><span>分段:</span><div><mx-field>1</mx-field><mx-spin></mx-spin></div><span></span><span>收缩</span><div><mx-field>0</mx-field><mx-spin></mx-spin></div>
 <span></span><span></span><span></span><span>滑块</span><div><mx-field>22</mx-field><mx-spin></mx-spin></div></div>
 <div class="bs"><mx-btn>应用</mx-btn><mx-btn class="o">确定</mx-btn><mx-btn>取消</mx-btn></div></div>`);

def('mx-watermark',`:host{position:absolute;left:765px;top:646px;width:180px;height:85px;background:#202d57;box-sizing:border-box;padding:25px 0 0 14px;display:flex;gap:13px;color:#c4c9d6}
 .c{display:flex;flex-direction:column}
 .t{font:700 26.500px/28px "Noto Sans CJK SC",sans-serif;white-space:nowrap;color:#d6dae4;margin-top:-3px}
 .s{font:10px/1 "Liberation Sans",sans-serif;letter-spacing:.95px;margin-top:4px;color:#9aa2b8;white-space:nowrap}`,
 `<svg width="34" height="36" viewBox="0 0 34 36"><path d="M8 3C4 3 2 5 2 9V27C2 31 4 34 8 34L16 34C24 33 32 24 32 18C32 12 24 3 16 2" fill="none" stroke="#b8bdcb" stroke-width="3"/><path d="M8 9V27" stroke="#b8bdcb" stroke-width="2.500"/><path d="M14 13L21 18L14 23z" fill="#c4c9d6"/><path d="M23 13V23" stroke="#c4c9d6" stroke-width="1.500"/></svg>
 <div class="c"><div class="t">溜溜自学</div><div class="s">ZIXUE.3D66.COM</div></div>`);
</script>
</body>
</html>
